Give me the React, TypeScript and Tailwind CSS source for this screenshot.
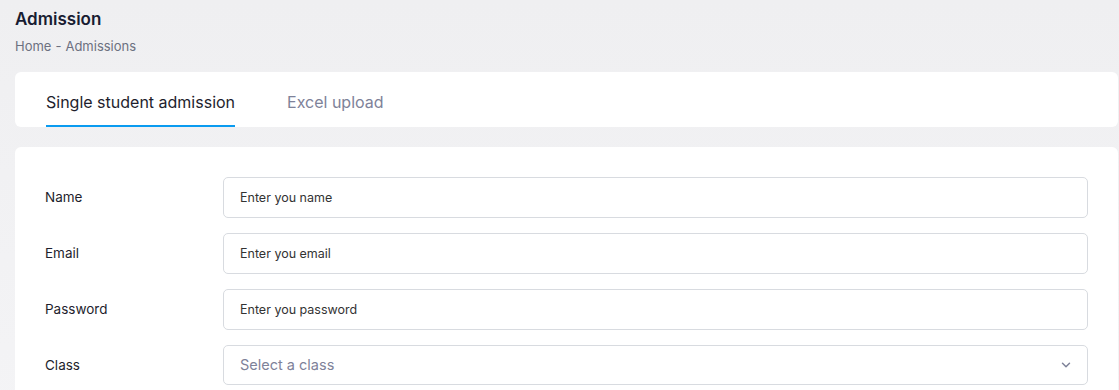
import { ChevronDown } from "lucide-react"

const FIELDS = [
  { label: "Name", placeholder: "Enter you name" },
  { label: "Email", placeholder: "Enter you email" },
  { label: "Password", placeholder: "Enter you password" },
] as const

export default function App() {
  return (
    <div
      className="min-h-[390px] bg-gradient-to-b from-[#efeff1] to-[#f4f4f6] pl-[15px] pr-px pt-[10px] pb-6"
      style={{ fontFamily: "Inter, 'Noto Sans', sans-serif" }}
    >
      {/* Page header */}
      <h1 className="text-[17px] font-semibold leading-[19px] text-[#181c32]">Admission</h1>
      <div className="mt-[10px] flex items-center gap-1 text-[13px] leading-[15px] text-[#6c7080]">
        <span>Home</span>
        <span>-</span>
        <span>Admissions</span>
      </div>

      {/* Tabs */}
      <div className="mt-[18px] flex h-[55px] items-end gap-[52px] rounded-md bg-white px-[31px]">
        <button className="border-b-2 border-[#0a9bf0] pb-[13px] text-[16px] leading-[19px] text-[#1e1e2d]">
          Single student admission
        </button>
        <button className="pb-[15px] text-[16px] leading-[19px] text-[#7e8299]">Excel upload</button>
      </div>

      {/* Form */}
      <div className="mt-[20px] flex flex-col gap-[15px] rounded-md bg-white pl-[30px] pr-[30px] pt-[30px] pb-6">
        {FIELDS.map((f) => (
          <div key={f.label} className="flex items-center">
            <label className="w-[178px] text-[13.5px] text-[#1e1e2d]">{f.label}</label>
            <input
              className="h-[41px] flex-1 rounded-[5px] border border-[#d8dbe0] px-4 text-[12.5px] text-[#333] outline-none placeholder:text-[#333]"
              placeholder={f.placeholder}
            />
          </div>
        ))}
        <div className="flex items-center">
          <label className="w-[178px] text-[13.5px] text-[#1e1e2d]">Class</label>
          <div className="flex h-[40px] flex-1 items-center justify-between rounded-[5px] border border-[#d8dbe0] pl-4 pr-[14px]">
            <span className="text-[14.5px] text-[#7e8299]">Select a class</span>
            <ChevronDown className="h-[14px] w-[14px] text-[#7e8299]" strokeWidth={2.5} />
          </div>
        </div>
      </div>
    </div>
  )
}
